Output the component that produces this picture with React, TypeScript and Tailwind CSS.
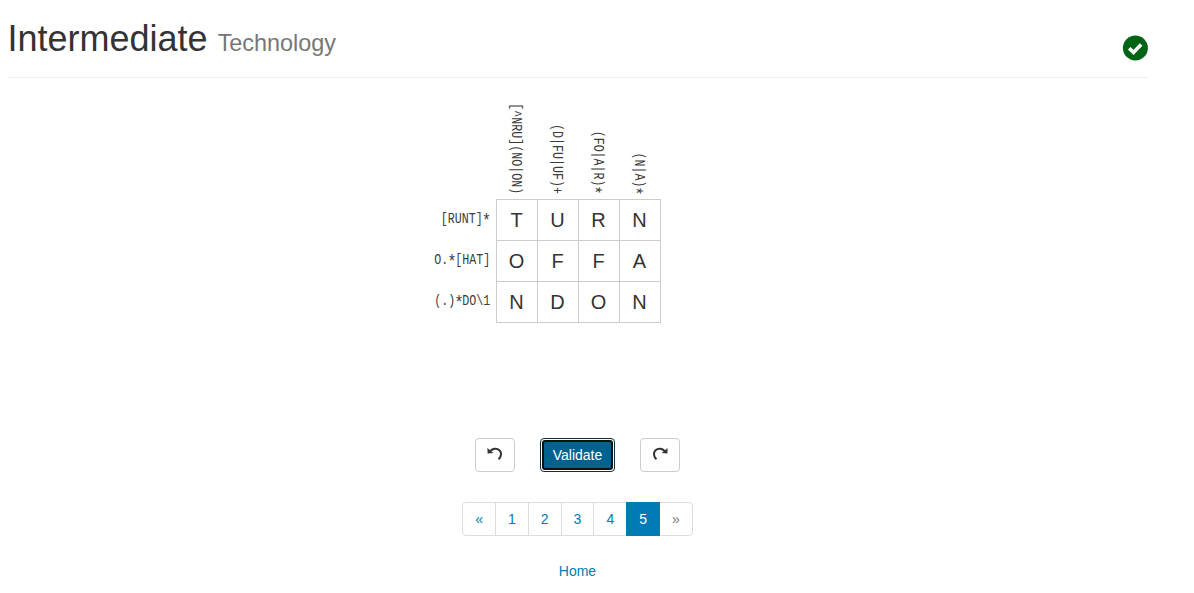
import React from "react";

const columnClues = ["[^NRU](NO|ON)", "(D|FU|UF)+", "(FO|A|R)*", "(N|A)*"];
const rowClues = ["[RUNT]*", "O.*[HAT]", "(.)*DO\\1"];
const answers = ["TURN", "OFFA", "NDON"];
const pages = ["«", "1", "2", "3", "4", "5", "»"];

function Clue({ text, vertical = false }: { text: string; vertical?: boolean }) {
  return (
    <span
      className={
        "whitespace-pre font-['Liberation_Mono',monospace] text-[14px] leading-[18px] text-[#3c3c3c] " +
        (vertical ? "origin-bottom scale-y-[0.833] [writing-mode:vertical-rl]" : "origin-right scale-x-[0.833]")
      }
    >
      {text.split(/(\*)/).map((part, i) =>
        part === "*" ? (
          <span
            key={i}
            className={
              "relative text-[18px] leading-none tracking-[-2.4px] " + (vertical ? "right-[4px] top-[-1px]" : "top-[3px] left-[-1px]")
            }
          >
            *
          </span>
        ) : (
          part
        ),
      )}
    </span>
  );
}

function TurnArrow({ flipped = false }: { flipped?: boolean }) {
  return (
    <svg viewBox="0 0 16 14" className={"h-[14px] w-4 " + (flipped ? "-scale-x-100" : "")} fill="none">
      <path d="M3.2 4.2C5.6 1.3 9.9.9 12.4 3.3c2.4 2.4 2.2 6-.9 8.9" stroke="#333" strokeWidth="2" />
      <path d="M.4 1 .6 6.5 6.3 6z" fill="#333" />
    </svg>
  );
}

export default function App() {
  return (
    <main className="ml-2 w-[1140px] bg-white pt-[18px] font-['Liberation_Sans',Arial,sans-serif] text-sm leading-5 text-[#333]">
      <header className="flex h-[60px] items-start justify-between border-b border-[#eee]">
        <h1 className="-ml-[0.5px] pt-px text-[36px] leading-[40px] font-medium">
          Intermediate <small className="text-[23.4px] leading-none font-normal text-[#777]">Technology</small>
        </h1>
        <svg viewBox="0 0 26 26" className="mt-[17px] h-[26px] w-[26px]">
          <circle cx="13.4" cy="13" r="12.5" fill="#006414" />
          <path d="m7.2 13.2 4.3 4.2 7.6-8" fill="none" stroke="white" strokeWidth="3.6" />
        </svg>
      </header>

      <section className="ml-[408px] w-[245px] pt-[21px]">
        <div className="flex h-[100px] items-end pb-[5px] pl-20">
          {columnClues.map((clue) => (
            <div key={clue} className="flex w-[41px] justify-center pr-[2px]">
              <Clue text={clue} vertical />
            </div>
          ))}
        </div>
        <div className="flex">
          <div className="w-20">
            {rowClues.map((clue) => (
              <div key={clue} className="flex h-[41px] items-center justify-end pr-[6px] pb-[2px]">
                <Clue text={clue} />
              </div>
            ))}
          </div>
          <div className="border-t border-l border-[#ccc]">
            {answers.map((answer) => (
              <div key={answer} className="flex">
                {answer.split("").map((letter, i) => (
                  <div
                    key={i}
                    className="flex h-[41px] w-[41px] items-center justify-center border-r border-b border-[#ccc] pr-px text-xl leading-5"
                  >
                    {letter}
                  </div>
                ))}
              </div>
            ))}
          </div>
        </div>
      </section>

      <div className="mt-[115px] flex justify-center gap-[25px] pr-px">
        <button className="flex h-[34px] w-10 items-start justify-center rounded border border-[#ccc] pt-[8px]" aria-label="Undo">
          <TurnArrow />
        </button>
        <button className="h-[34px] w-[75px] rounded border border-[#0c2c40] bg-white p-px">
          <span className="flex h-full items-center justify-center rounded-[3px] border-2 border-[#101010] bg-[#00628f] text-white">
            Validate
          </span>
        </button>
        <button className="flex h-[34px] w-10 items-start justify-center rounded border border-[#ccc] pt-[8px]" aria-label="Redo">
          <TurnArrow flipped />
        </button>
      </div>

      <nav className="mt-[30px] flex justify-center pr-px">
        {pages.map((page) => (
          <a
            key={page}
            className={
              "-ml-px border px-3 py-1.5 first:ml-0 first:rounded-l last:rounded-r " +
              (page === "5"
                ? "relative border-[#007bb5] bg-[#007bb5] text-white"
                : page === "»"
                  ? "border-[#ddd] text-[#777]"
                  : "border-[#ddd] text-[#007bb5]")
            }
          >
            {page}
          </a>
        ))}
      </nav>
      <div className="mt-[25px] pr-px text-center">
        <a className="text-[#007bb5]">Home</a>
      </div>
    </main>
  );
}
